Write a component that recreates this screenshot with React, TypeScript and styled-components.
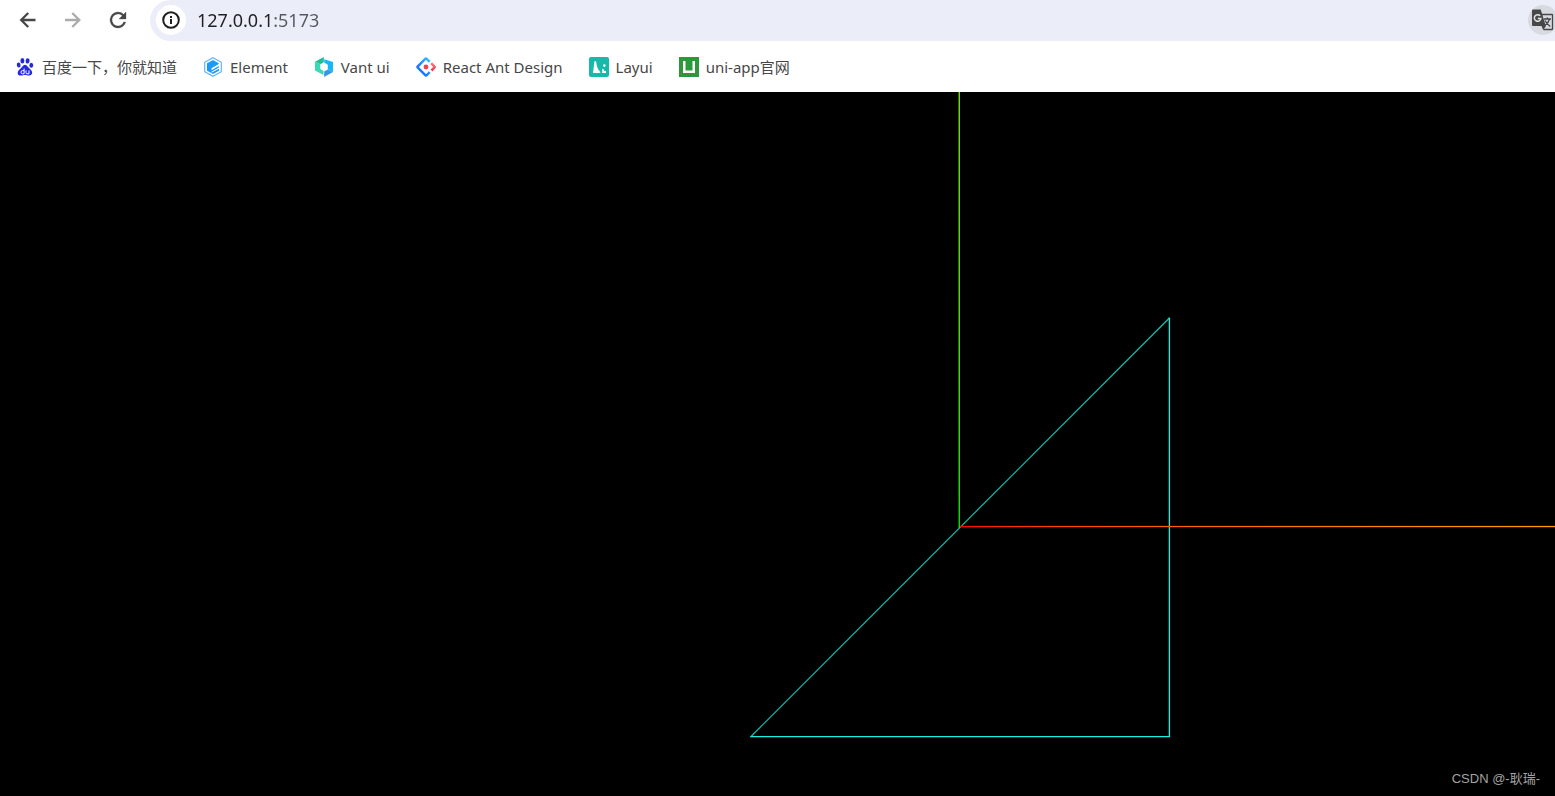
import React from "react";
import styled, { createGlobalStyle } from "styled-components";

const GlobalStyle = createGlobalStyle`
  * { box-sizing: border-box; }
  body {
    margin: 0;
    background: #ffffff;
    font-family: "Noto Sans", "Noto Sans CJK SC", sans-serif;
  }
`;

const Page = styled.div`
  display: flex;
  flex-direction: column;
  min-height: 100vh;
  overflow: hidden;
`;

const Toolbar = styled.header`
  display: flex;
  align-items: center;
  height: 41px;
  padding-left: 16px;
`;

const NavButtons = styled.div`
  display: flex;
  gap: 21px;
  margin-right: 20px;
  padding-bottom: 2px;
`;

const IconButton = styled.button<{ $color?: string }>`
  display: flex;
  align-items: center;
  justify-content: center;
  width: 24px;
  height: 24px;
  padding: 0;
  border: 0;
  background: transparent;
  color: ${(p) => p.$color ?? "#474747"};
`;

const AddressBar = styled.form`
  display: flex;
  flex: 1;
  align-items: center;
  height: 41px;
  padding: 0 0 2px 6px;
  border-radius: 21px 0 0 21px;
  background: #ebeef8;
  overflow: hidden;
`;

const RoundButton = styled(IconButton)<{ $fill: string }>`
  flex: none;
  width: 30px;
  height: 30px;
  border-radius: 50%;
  background: ${(p) => p.$fill};
`;

const TranslateButton = styled(RoundButton)`
  margin-right: -3px;
`;

const AddressInput = styled.input`
  flex: 1;
  min-width: 0;
  height: 32px;
  padding: 0 0 0 11px;
  border: 0;
  outline: 0;
  background: linear-gradient(90deg, #1f2024 86px, #55585e 86px);
  background-clip: text;
  color: transparent;
  font-family: inherit;
  font-size: 18px;
`;

const Bookmarks = styled.nav`
  display: flex;
  align-items: center;
  gap: 26px;
  height: 51px;
  padding: 1px 15px 0;
`;

const Bookmark = styled.a`
  display: flex;
  align-items: center;
  gap: 7px;
  color: #474747;
  font-size: 15px;
  line-height: 20px;
  text-decoration: none;
  white-space: nowrap;
`;

const Viewport = styled.main`
  position: relative;
  display: flex;
  flex: 1;
  background: #000000;
`;

const Scene = styled.svg`
  display: block;
  width: 100%;
  height: auto;
`;

const Credit = styled.span`
  position: absolute;
  right: 15px;
  bottom: 7px;
  color: #a3a3a3;
  font-family: "Liberation Sans", "Noto Sans CJK SC", sans-serif;
  font-size: 13px;
  line-height: 20px;
`;

const BackIcon = () => (
  <svg width="22" height="22" viewBox="0 0 22 22" fill="none" stroke="currentColor" strokeWidth="2.300">
    <path d="M18.500 11H4.500M11.200 4L4.200 11L11.200 18" />
  </svg>
);

const ForwardIcon = () => (
  <svg width="22" height="22" viewBox="0 0 22 22" fill="none" stroke="currentColor" strokeWidth="2.300">
    <path d="M3 11H17M10.300 4L17.300 11L10.300 18" />
  </svg>
);

const ReloadIcon = () => (
  <svg width="24" height="24" viewBox="0 0 24 24" fill="currentColor" stroke="currentColor" strokeWidth="0.300">
    <path d="M17.650 6.350A7.960 7.960 0 0 0 12 4a8 8 0 1 0 7.730 10h-2.080A6 6 0 1 1 12 6c1.660 0 3.140.69 4.220 1.780L13 11h7V4l-2.350 2.350z" />
  </svg>
);

const InfoIcon = () => (
  <svg width="20" height="20" viewBox="0 0 20 20" fill="none" stroke="currentColor" strokeWidth="2">
    <circle cx="10" cy="10" r="7.800" />
    <path d="M10 9V14M10 6V8" />
  </svg>
);

const TranslateIcon = () => (
  <svg width="22" height="22" viewBox="0 0 22 22" fill="none">
    <path d="M9 5.500H20Q20.500 5.500 20.500 6V20Q20.500 20.500 20 20.500H11.500" stroke="#474747" strokeWidth="1.300" />
    <path d="M1 0.500H8.700L13.800 17H1Q0 17 0 16V1.500Q0 0.500 1 0.500ZM9.500 17H14L11.200 21Z" fill="#474747" />
    <path d="M8.200 6.900A3.300 3.300 0 1 0 8.900 9.500H5.800" stroke="#e4e5e9" strokeWidth="1.500" />
    <path d="M11.800 10H19M15.300 8.500V10M17.600 10Q16.500 14 12.800 16.500M13 11.500Q14.500 15 18.300 17.500" stroke="#474747" strokeWidth="1.300" />
  </svg>
);

const BaiduIcon = () => (
  <svg width="20" height="20" viewBox="0 0 20 20" fill="#2529d8">
    <ellipse cx="7.400" cy="3.800" rx="2" ry="2.700" />
    <ellipse cx="12.600" cy="3.900" rx="2" ry="2.700" transform="rotate(8 12.600 3.900)" />
    <ellipse cx="3.700" cy="8" rx="1.900" ry="2.500" transform="rotate(-12 3.700 8)" />
    <ellipse cx="16.300" cy="8.300" rx="1.900" ry="2.500" />
    <path d="M10 7.800C12.200 7.800 12.700 10.200 14.500 11.600C18.600 14.800 17.600 18.500 14.200 18.600C12.300 18.700 11.600 18.100 10 18.100S7.400 18.700 5.600 18.600C2 18.400 1.600 14.500 5.400 11.700C7.300 10.200 7.800 7.800 10 7.800Z" />
    <path d="M9.100 11.500V16.800H7.500Q6 16.800 6 15.200T7.500 13.600H9.100M11 13.400V15.700Q11 16.800 12 16.800H14V13.400" fill="none" stroke="#ffffff" strokeWidth="1" />
  </svg>
);

const ElementIcon = () => (
  <svg width="20" height="20" viewBox="0 0 20 20">
    <path d="M10 0.700L18.300 5.300V14.700L10 19.300L1.700 14.700V5.300Z" fill="#ffffff" stroke="#55b2fb" strokeWidth="1.100" />
    <path d="M10 3L15.700 6.200V7.100L8.500 11.300V13.200L15.800 9V10.600L8.500 14.800V15.800L16 11.700V13.700L10 17L4 13.700V6.300Z" fill="#1b9afa" />
  </svg>
);

const VantIcon = () => (
  <svg width="20" height="20" viewBox="0 0 20 20">
    <path d="M9.800 0V5.300L6.300 7.300L1 4.800Z" fill="#20bd96" />
    <path d="M1 4.800L6.300 7.300V12L9.500 13.900V18L1 13.400Z" fill="#36dab6" />
    <path d="M10.200 2.200L19 5V15L13.800 12.500V7.700L10.200 5.600Z" fill="#16b7fa" />
    <path d="M13.800 12.500L19 15L10.200 20V14.500Z" fill="#3897e2" />
  </svg>
);

const AntIcon = () => (
  <svg width="20" height="20" viewBox="0 0 20 20" fill="none" strokeWidth="2.500">
    <defs>
      <linearGradient id="antBlue" x1="0" y1="1" x2="1" y2="0">
        <stop offset="0.300" stopColor="#1677ff" />
        <stop offset="1" stopColor="#35c4fb" />
      </linearGradient>
      <linearGradient id="antRed" x1="0" y1="0" x2="0" y2="1">
        <stop offset="0" stopColor="#fa7e86" />
        <stop offset="1" stopColor="#f23546" />
      </linearGradient>
    </defs>
    <path d="M13.700 4.800L10.700 1.800Q10 1.100 9.300 1.800L1.800 9.300Q1.100 10 1.800 10.700L9.300 18.200Q10 18.900 10.700 18.200L13.700 15.200" stroke="url(#antBlue)" />
    <path d="M15.200 6.200L18.300 9.300Q19 10 18.300 10.700L15.500 13.500" stroke="url(#antRed)" />
    <circle cx="10" cy="10" r="2.400" fill="#f04250" />
  </svg>
);

const LayuiIcon = () => (
  <svg width="20" height="20" viewBox="0 0 20 20">
    <rect width="20" height="20" rx="2" fill="#16baaa" />
    <path d="M4 16L5.400 4.500Q6.800 3 7.300 5.500Q7.800 11.500 11.300 15V16ZM13.200 12Q14 11.300 14.600 12.500Q15 14 17 14.300V16H13.200Z" fill="#ffffff" />
    <circle cx="15.300" cy="8.600" r="1.300" fill="#ffffff" />
  </svg>
);

const UniIcon = () => (
  <svg width="20" height="20" viewBox="0 0 20 20">
    <rect width="20" height="20" fill="#2b9939" />
    <path d="M4 4H6.500V13.500H13.500V4H16V16H4Z" fill="#ffffff" />
  </svg>
);

const bookmarks = [
  { label: "百度一下，你就知道", href: "#baidu", Icon: BaiduIcon },
  { label: "Element", href: "#element", Icon: ElementIcon },
  { label: "Vant ui", href: "#vant", Icon: VantIcon },
  { label: "React Ant Design", href: "#ant-design", Icon: AntIcon },
  { label: "Layui", href: "#layui", Icon: LayuiIcon },
  { label: "uni-app官网", href: "#uni-app", Icon: UniIcon },
];

// Axis colours fade linearly in light, so the stops follow the sRGB curve.
const axisStops = [
  [0, 0],
  [0.02, 28],
  [0.05, 48],
  [0.1, 70],
  [0.2, 97],
  [0.4, 134],
  [0.6, 161],
  [1, 203],
];

export default function App() {
  return (
    <Page>
      <GlobalStyle />
      <Toolbar>
        <NavButtons>
          <IconButton type="button" aria-label="Back"><BackIcon /></IconButton>
          <IconButton type="button" aria-label="Forward" $color="#ababab"><ForwardIcon /></IconButton>
          <IconButton type="button" aria-label="Reload"><ReloadIcon /></IconButton>
        </NavButtons>
        <AddressBar onSubmit={(e) => e.preventDefault()}>
          <RoundButton type="button" aria-label="Site information" $fill="#ffffff" $color="#1f1f1f">
            <InfoIcon />
          </RoundButton>
          <AddressInput aria-label="Address" defaultValue="127.0.0.1:5173" spellCheck={false} />
          <TranslateButton type="button" aria-label="Translate" $fill="#d8dae1">
            <TranslateIcon />
          </TranslateButton>
        </AddressBar>
      </Toolbar>
      <Bookmarks aria-label="Bookmarks">
        {bookmarks.map(({ label, href, Icon }) => (
          <Bookmark key={label} href={href}>
            <Icon />
            <span>{label}</span>
          </Bookmark>
        ))}
      </Bookmarks>
      <Viewport>
        <Scene viewBox="0 0 1555 704" preserveAspectRatio="xMinYMin slice" fill="none" role="img" aria-label="Triangle outline with coordinate axes">
          <defs>
            <linearGradient id="axisX" gradientUnits="userSpaceOnUse" x1="960" y1="0" x2="2005" y2="0">
              {axisStops.map(([at, v]) => (
                <stop key={at} offset={at} stopColor={`rgb(255, ${v}, 0)`} />
              ))}
            </linearGradient>
            <linearGradient id="axisY" gradientUnits="userSpaceOnUse" x1="0" y1="435" x2="0" y2="-610">
              {axisStops.map(([at, v]) => (
                <stop key={at} offset={at} stopColor={`rgb(${v}, 255, 0)`} />
              ))}
            </linearGradient>
          </defs>
          <path d="M1169.400 226L750.500 645" stroke="#14c8b8" strokeWidth="1.100" />
          <path d="M1169.400 225.500V645M750.500 644.600H1170" stroke="#16f0dc" strokeWidth="1.350" />
          <rect x="960" y="433.900" width="595" height="1.300" fill="url(#axisX)" />
          <rect x="958.600" y="0" width="1.250" height="436" fill="url(#axisY)" />
        </Scene>
        <Credit>CSDN @-耿瑞-</Credit>
      </Viewport>
    </Page>
  );
}
